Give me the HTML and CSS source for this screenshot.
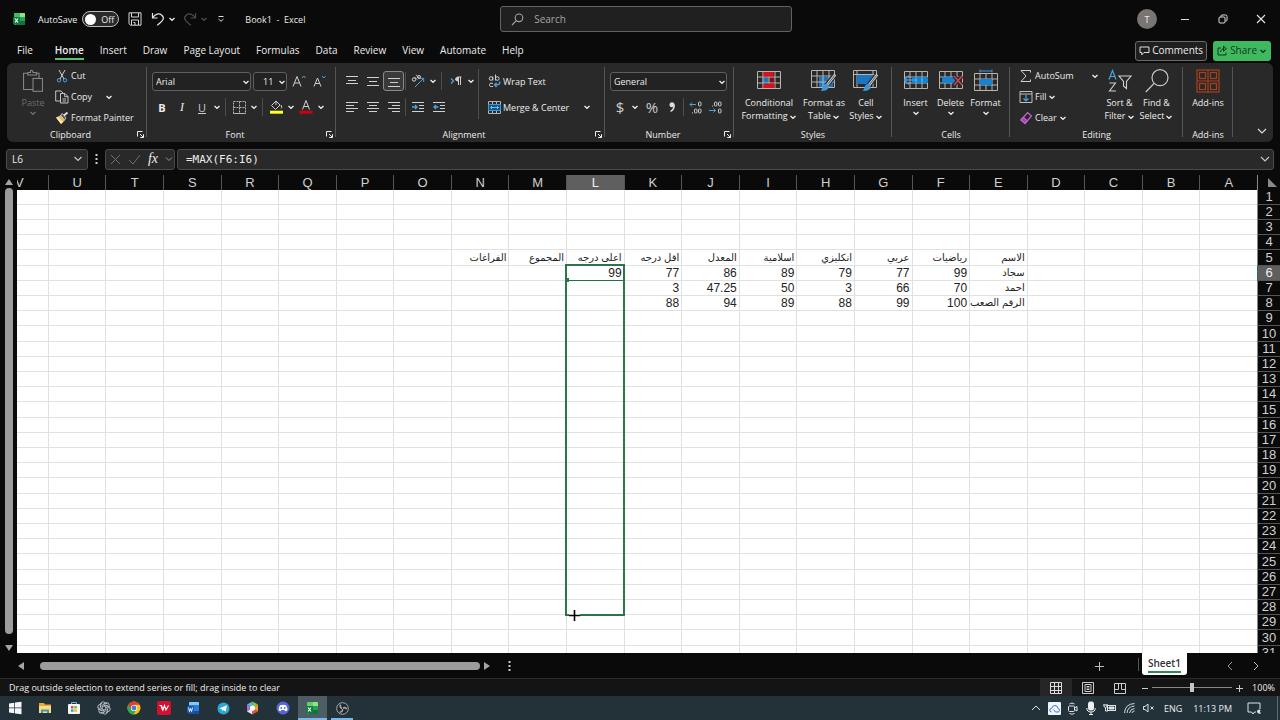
FILE: index.html
```html
<!DOCTYPE html>
<html lang="en">
<head>
<meta charset="utf-8">
<title>Book1 - Excel</title>
<link rel="stylesheet" href="styles.css">
</head>
<body>
<svg class="defs" aria-hidden="true">
  <symbol id="chev" viewBox="0 0 8 8"><path d="M1.500 3 4 5.300 6.500 3" fill="none" stroke="currentColor" stroke-width="1.300"/></symbol>
  <symbol id="launch" viewBox="0 0 9 9"><path d="M1.500 6.500V1.500H6.500M4 4l3.500 3.500M7.500 4.200v3.300H4.200" fill="none" stroke="currentColor"/></symbol>
  <symbol id="grid" viewBox="0 0 24 20"><path d="M.5 1.500h23v17H.5zM.5 7h23M.5 13h23M6 1.500v17M12 1.500v17M18 1.500v17" fill="none" stroke="#b9b5ad"/></symbol>
  <symbol id="brush" viewBox="0 0 16 18"><path d="M14.800 1 7 11" stroke="#292929" stroke-width="5"/><path d="M14.500 1.500 7.500 10.500" stroke="#c9c9c9" stroke-width="2.800" stroke-linecap="round"/><path d="M14.500 1.500 7.500 10.500" stroke="#444" stroke-width=".8"/><path d="M8.300 11.500c1.300 3.500-2 6-8 5.300 2.500-1 2-5.500 4.500-6.500 1.400-.4 3 0 3.500 1.200z" fill="#3f97d3"/></symbol>
</svg>

<header class="titlebar">
  <div class="quick">
    <svg class="logo" width="14" height="14" viewBox="0 0 14 14"><rect x="2" y="1" width="11" height="12" rx="1" fill="#21a35a"/><path d="M8 1h4q1 0 1 1v3H8z" fill="#9be07a"/><path d="M2 5V2q0-1 1-1h5v4z" fill="#3dbb62"/><path d="M8 9h5v3q0 1-1 1H4V9z" fill="#14703d"/><rect x="1" y="5" width="7" height="7" rx="1" fill="#107c41"/><path d="m3 6.500 3 4m0-4-3 4" stroke="#fff" stroke-width="1.100"/></svg>
    <label class="autosave">AutoSave <input type="checkbox" class="switch-input"><span class="switch"><i></i>Off</span></label>
    <button class="plain" aria-label="Save"><svg width="14" height="14" viewBox="0 0 14 14" fill="none" stroke="#d8d8d8"><path d="M1 .8h12v12.400H2.500L1 11.800zM3.500 1v4h7V1M3.500 13V8h7v5M5.500 10.500h1.500V13"/></svg></button>
    <button class="plain undo" aria-label="Undo"><svg width="14" height="14" viewBox="0 0 14 14" fill="none" stroke="#e4e4e4" stroke-width="1.200"><path d="M1.500 1v5h5M1.700 5.800C4 2 8 .8 10.800 3.200s2.200 5-4.600 10"/></svg><svg class="chev"><use href="#chev"/></svg></button>
    <button class="plain redo" aria-label="Redo" disabled><svg width="14" height="14" viewBox="0 0 14 14" fill="none" stroke="#4c4c4c" stroke-width="1.200"><path d="M12.500 1v5h-5M12.300 5.800C10 2 6 .8 3.200 3.200S1 8.200 7.800 13.200"/></svg><svg class="chev"><use href="#chev"/></svg></button>
    <button class="plain custom" aria-label="Customize toolbar"><svg width="8" height="8" viewBox="0 0 8 8" fill="none" stroke="#ddd"><path d="M1.500 1.500h5M1.500 4 4 6.300 6.500 4"/></svg></button>
    <h1 class="doc">Book1&nbsp; -&nbsp; Excel</h1>
  </div>
  <label class="search"><svg width="13" height="13" viewBox="0 0 13 13" fill="none" stroke="#a5a5a5" stroke-width="1.100"><circle cx="8" cy="4.800" r="3.800"/><path d="M5.300 7.600 1 12"/></svg><input type="text" placeholder="Search" aria-label="Search"></label>
  <div class="window">
    <button class="avatar" aria-label="Account">T</button>
    <button class="plain win" aria-label="Minimize"><svg width="10" height="10" viewBox="0 0 10 10" stroke="#ddd"><path d="M1 5.500h8"/></svg></button>
    <button class="plain win" aria-label="Restore"><svg width="10" height="10" viewBox="0 0 10 10" fill="none" stroke="#ddd"><rect x="1" y="3" width="6" height="6" rx="1"/><path d="M3 2.800V2q0-1 1-1h3.500Q9 1 9 2.500V6q0 1-1.500 1"/></svg></button>
    <button class="plain win" aria-label="Close"><svg width="10" height="10" viewBox="0 0 10 10" stroke="#e4e4e4" stroke-width="1.100"><path d="m1 1 8 8M9 1 1 9"/></svg></button>
  </div>
</header>

<nav class="tabs">
  <button class="file">File</button><button class="on">Home</button><button>Insert</button><button>Draw</button><button>Page Layout</button><button>Formulas</button><button>Data</button><button>Review</button><button>View</button><button>Automate</button><button>Help</button>
  <span class="grow"></span>
  <button class="comments"><svg width="11" height="10" viewBox="0 0 11 10" fill="none" stroke="#e0e0e0"><path d="M1 1h9v5.500H5L2.800 8.800V6.500H1z"/></svg>Comments</button>
  <button class="share"><svg width="11" height="11" viewBox="0 0 11 11" fill="none" stroke="#0c3b1c"><path d="M4 3H1v7h8V7.500M3.500 7c.3-2.500 2-3.300 4-3.300M6.500 1.200l3 2.500-3 2.500z"/></svg>Share<svg class="chev"><use href="#chev"/></svg></button>
</nav>

<main class="ribbon">
  <section class="group clipboard">
    <div class="body">
      <button class="big paste" disabled><svg width="26" height="28" viewBox="0 0 26 28" fill="none" stroke="#8a8a8a" stroke-width="1.200"><path d="M7 5H2v19h11M17 5h3v6"/><path d="M7 7V4h3q0-2.500 1.500-2.500T13 4h4v3z"/><rect x="13" y="11" width="11" height="15"/></svg><span>Paste</span><svg class="chev"><use href="#chev"/></svg></button>
      <div class="stack">
        <button class="line"><svg width="14" height="14" viewBox="0 0 14 14" fill="none" stroke="#d2d2d2"><path d="M4 1 9 10M10 1 5 10"/><circle cx="4" cy="11.200" r="1.700" stroke="#4aa3df"/><circle cx="10" cy="11.200" r="1.700" stroke="#4aa3df"/></svg>Cut</button>
        <button class="line"><svg width="14" height="14" viewBox="0 0 14 14" fill="none" stroke="#c4c4c4"><path d="M5 11H.7V1H6l2 2M5.500 3.500h4.500l3 3v6.500H5.500zM9.700 3.700v3H13M7.500 9h3.500M7.500 11h3.500"/></svg>Copy<svg class="chev far"><use href="#chev"/></svg></button>
        <button class="line"><svg width="14" height="14" viewBox="0 0 14 14"><path d="M1 6.500 6 4l4 5.500L6 13z" fill="#e7b45e"/><path d="m1 6.500 2.500-.5L8 11l-2 2z" fill="#fbe3ae"/><path d="m5.500 4 2-1.500L11 7 9.500 9z" fill="#555" stroke="#ddd" stroke-width=".8"/><path d="m9 4.500 3.500-3" stroke="#ddd" stroke-width="2"/></svg>Format Painter</button>
      </div>
    </div>
    <footer class="wide">Clipboard<button class="launch" aria-label="Clipboard options"><svg><use href="#launch"/></svg></button></footer>
  </section>

  <section class="group font">
    <div class="body rows">
      <div class="row">
        <span class="select face"><select aria-label="Font"><option>Arial</option></select><svg class="chev"><use href="#chev"/></svg></span>
        <span class="select size"><select aria-label="Font size"><option>11</option></select><svg class="chev"><use href="#chev"/></svg></span>
        <button class="ib" aria-label="Increase font size"><svg width="14" height="14" viewBox="0 0 14 14" fill="none" stroke="#d0d0d0"><path d="M1 12.500 5 2.500l4 10M2.500 9h5"/><path d="m10 4 1.800-2L13.500 4" stroke="#4aa3df"/></svg></button>
        <button class="ib" aria-label="Decrease font size"><svg width="14" height="14" viewBox="0 0 14 14" fill="none" stroke="#d0d0d0"><path d="M2 12.500 5.500 4 9 12.500M3.300 9.500h4.500"/><path d="m10 2 1.800 2 1.700-2" stroke="#4aa3df"/></svg></button>
      </div>
      <div class="row">
        <button class="ib bold">B</button><button class="ib ital">I</button><button class="ib under">U</button><button class="cb" aria-label="Underline options"><svg class="chev"><use href="#chev"/></svg></button>
        <i class="sep"></i>
        <button class="ib" aria-label="Borders"><svg width="13" height="13" viewBox="0 0 13 13" fill="none" stroke="#b5b5b5"><path d="M.5.5h12v12H.5zM6.500.5v12M.5 6.500h12" stroke-dasharray="2 1"/><path d="M.5 12.500h12"/></svg></button><button class="cb" aria-label="Border options"><svg class="chev"><use href="#chev"/></svg></button>
        <i class="sep"></i>
        <button class="ib" aria-label="Fill color"><svg width="14" height="14" viewBox="0 0 14 14" fill="none" stroke="#d0d0d0"><path d="m7 1 4 4-4.500 4.500-4-4zM7 1v4M12 5q1.500 3 0 3.500"/><path d="M1 12.200h13" stroke="#ffff24" stroke-width="3"/></svg></button><button class="cb" aria-label="Fill color options"><svg class="chev"><use href="#chev"/></svg></button>
        <button class="ib" aria-label="Font color"><svg width="14" height="14" viewBox="0 0 14 14" fill="none" stroke="#d0d0d0"><path d="m3.500 9.500 3.500-9 3.500 9M4.800 6.500h4.500"/><path d="M.5 12.200h13" stroke="#d00012" stroke-width="3"/></svg></button><button class="cb" aria-label="Font color options"><svg class="chev"><use href="#chev"/></svg></button>
      </div>
    </div>
    <footer class="wide">Font<button class="launch" aria-label="Font options"><svg><use href="#launch"/></svg></button></footer>
  </section>

  <section class="group align">
    <div class="body">
      <div class="rows left">
        <div class="row">
          <button class="ib" aria-label="Top align"><svg width="12" height="12" viewBox="0 0 12 12" stroke="#d0d0d0"><path d="M0 1.500h12M2 5.500h8M0 8.500h12"/></svg></button><button class="ib" aria-label="Middle align"><svg width="12" height="12" viewBox="0 0 12 12" stroke="#d0d0d0"><path d="M0 2.500h12M2 6.500h8M0 10.500h12"/></svg></button><button class="ib sel" aria-label="Bottom align"><svg width="12" height="12" viewBox="0 0 12 12" stroke="#d0d0d0"><path d="M0 3.500h12M2 7.500h8M0 11.500h12"/></svg></button>
          <i class="sep tight"></i>
          <button class="ib" aria-label="Orientation"><svg width="14" height="14" viewBox="0 0 14 14" fill="none" stroke="#d0d0d0"><circle cx="3" cy="5.500" r="1.700"/><path d="m3.500 3 2.500 2.500M5 .8l3.500 3.500"/><circle cx="8" cy="3" r="1.500"/><path d="m4 13 8.500-8.500M9 4.300h3.700V8" stroke="#4aa3df"/></svg></button><button class="cb" aria-label="Orientation options"><svg class="chev"><use href="#chev"/></svg></button>
          <i class="sep"></i>
          <button class="ib" aria-label="Text direction"><svg width="12" height="12" viewBox="0 0 12 12" fill="none" stroke="#d0d0d0"><path d="m1 3.500 2.500 2.500L1 8.500" stroke="#4aa3df" stroke-width="1.300"/><path d="M8.500 2v8M10.500 2v8M11.500 2H7.500"/><path d="M8 2.200q-2.500.3-2.500 2T8 6z" fill="#d0d0d0"/></svg></button><button class="cb" aria-label="Text direction options"><svg class="chev"><use href="#chev"/></svg></button>
        </div>
        <div class="row">
          <button class="ib" aria-label="Align left"><svg width="12" height="12" viewBox="0 0 12 12" stroke="#d0d0d0"><path d="M0 1.500h12M0 4.500h8M0 7.500h12M0 10.500h8"/></svg></button><button class="ib" aria-label="Center"><svg width="12" height="12" viewBox="0 0 12 12" stroke="#d0d0d0"><path d="M0 1.500h12M2 4.500h8M0 7.500h12M2 10.500h8"/></svg></button><button class="ib" aria-label="Align right"><svg width="12" height="12" viewBox="0 0 12 12" stroke="#d0d0d0"><path d="M0 1.500h12M4 4.500h8M0 7.500h12M4 10.500h8"/></svg></button>
          <i class="sep tight"></i>
          <button class="ib" aria-label="Decrease indent"><svg width="12" height="12" viewBox="0 0 12 12" fill="none" stroke="#d0d0d0"><path d="M0 1.500h12M7 4.500h5M7 7.500h5M0 10.500h12"/><path d="M0 6h4.500M3 4l2 2-2 2" stroke="#4aa3df" stroke-width="1.300"/></svg></button><button class="ib" aria-label="Increase indent"><svg width="12" height="12" viewBox="0 0 12 12" fill="none" stroke="#d0d0d0"><path d="M0 1.500h12M7 4.500h5M7 7.500h5M0 10.500h12"/><path d="M.8 6h4.700M3 4 1 6l2 2" stroke="#4aa3df" stroke-width="1.300"/></svg></button>
        </div>
      </div>
      <i class="tall"></i>
      <div class="rows right">
        <div class="row"><button class="line"><svg width="13" height="14" viewBox="0 0 13 14" fill="none" stroke="#d0d0d0"><circle cx="3" cy="4.500" r="1.800"/><path d="M4.800 2.500v4M7.500.5v6M5 9.500Q2 8 1.500 10.500T5 12.500"/><circle cx="9.300" cy="4.500" r="1.800"/><path d="M11.500 7.500q1.500 3.500-5 3.500M8.500 8.800 6.500 11l2 2" stroke="#4aa3df" stroke-width="1.300"/></svg>Wrap Text</button></div>
        <div class="row"><button class="line"><svg width="13" height="13" viewBox="0 0 13 13" fill="none" stroke="#b5b5b5"><path d="M.5.5h12v12H.5zM4.500.5v3M8.500.5v3M4.500 9.500v3M8.500 9.500v3"/><path d="M.5 3.500h12v6H.5z" fill="#155480" stroke="#3f97d3"/><path d="M2.500 6.500h8M4 5 2.500 6.500 4 8M9 5l1.500 1.500L9 8" stroke="#6cc0f5"/></svg>Merge &amp; Center</button><button class="cb mergeopt" aria-label="Merge options"><svg class="chev"><use href="#chev"/></svg></button></div>
      </div>
    </div>
    <footer class="wide">Alignment<button class="launch" aria-label="Alignment options"><svg><use href="#launch"/></svg></button></footer>
  </section>

  <section class="group number">
    <div class="body rows">
      <div class="row"><span class="select fmt"><select aria-label="Number format"><option>General</option></select><svg class="chev"><use href="#chev"/></svg></span></div>
      <div class="row">
        <button class="ib sym">$</button><button class="cb" aria-label="Currency options"><svg class="chev"><use href="#chev"/></svg></button><button class="ib sym pct">%</button><button class="ib" aria-label="Comma style"><svg width="8" height="12" viewBox="0 0 8 12"><circle cx="4" cy="3.800" r="2.500" fill="#dcdcdc"/><path d="M6 3.500q.8 4.500-3.500 7" fill="none" stroke="#dcdcdc" stroke-width="1.400"/></svg></button>
        <i class="sep tight"></i>
        <button class="ib" aria-label="Increase decimal"><svg width="13" height="13" viewBox="0 0 13 13" fill="none" stroke="#c8c8c8"><rect x="9.500" y="1" width="2.500" height="4" rx="1"/><rect x="5.500" y="8" width="2.500" height="4" rx="1"/><rect x="9.500" y="8" width="2.500" height="4" rx="1"/><path d="M3.500 11.500v1"/><path d="M7 3.500H1M3 1.500l-2 2 2 2" stroke="#4aa3df"/></svg></button><button class="ib" aria-label="Decrease decimal"><svg width="13" height="13" viewBox="0 0 13 13" fill="none" stroke="#c8c8c8"><rect x="5.500" y="1" width="2.500" height="4" rx="1"/><rect x="9.500" y="1" width="2.500" height="4" rx="1"/><rect x="9.500" y="8" width="2.500" height="4" rx="1"/><path d="M3.500 4.500v1"/><path d="M0 9.500h6.500M4.500 7.500l2 2-2 2" stroke="#4aa3df"/></svg></button>
      </div>
    </div>
    <footer class="wide">Number<button class="launch" aria-label="Number options"><svg><use href="#launch"/></svg></button></footer>
  </section>

  <section class="group styles">
    <div class="body">
      <button class="big cf"><svg width="24" height="22" viewBox="0 0 24 22"><path d="M5.500 2h10v5h-10zM5.500 14h12v5h-12z" fill="#d3121f"/><path d="M5.500 7.500h6v6h-6z" fill="#1976c5"/><path d="M12 7.500h6v6h-6z" fill="#7c141c"/><use href="#grid" width="24" height="20"/><path d="M6.500 2h10v4.500h-10zM6.500 13.500h11V18h-11z" fill="#d3121f"/></svg><span>Conditional<br>Formatting<svg class="chev"><use href="#chev"/></svg></span></button>
      <button class="big ft"><svg width="26" height="24" viewBox="0 0 26 24"><path d="M8 8h14v10H8z" fill="#1976c5"/><use href="#grid" width="24" height="20"/><use href="#brush" x="9" y="5" width="16" height="18"/></svg><span>Format as<br>Table<svg class="chev"><use href="#chev"/></svg></span></button>
      <button class="big cs"><svg width="26" height="24" viewBox="0 0 26 24"><path d="M.5 1.500h23v17H.5zM.5 5.500h23M4 1.500v17M20 1.500v17" fill="none" stroke="#b9b5ad"/><path d="M4 6h16v9H4z" fill="#1976c5"/><use href="#brush" x="9" y="5" width="16" height="18"/></svg><span>Cell<br>Styles<svg class="chev"><use href="#chev"/></svg></span></button>
    </div>
    <footer>Styles</footer>
  </section>

  <section class="group cells">
    <div class="body">
      <button class="big"><svg width="26" height="22" viewBox="0 0 26 22"><g transform="translate(1 0)"><use href="#grid" width="24" height="20"/></g><path d="M9 7h16v6H9z" fill="#1583d4"/><path d="M13 7.500v5M19 7.500v5" stroke="#6cc0f5"/><path d="M12 10H1.500M6 5.500 1.500 10 6 14.500" fill="none" stroke="#3b9fe0" stroke-width="1.400"/></svg><span>Insert</span><svg class="chev"><use href="#chev"/></svg></button>
      <button class="big"><svg width="26" height="22" viewBox="0 0 26 22"><g transform="translate(1 0)"><use href="#grid" width="24" height="20"/></g><path d="M4 7h13v6H4z" fill="#1583d4"/><path d="m16 6 8 9M24 6l-8 9" stroke="#292929" stroke-width="4"/><path d="m16 6 8 9M24 6l-8 9" stroke="#e0434c" stroke-width="1.400"/></svg><span>Delete</span><svg class="chev"><use href="#chev"/></svg></button>
      <button class="big"><svg width="26" height="22" viewBox="0 -2 26 22"><g transform="translate(1 0)"><use href="#grid" width="24" height="20"/></g><path d="M7 7h12v6H7z" fill="#1583d4"/><path d="M7-1h12M7-2.500v3M19-2.500v3" stroke="#3b9fe0"/></svg><span>Format</span><svg class="chev"><use href="#chev"/></svg></button>
    </div>
    <footer>Cells</footer>
  </section>

  <section class="group editing">
    <div class="body">
      <div class="stack">
        <button class="line"><svg width="14" height="14" viewBox="0 0 14 14" fill="none" stroke="#d0d0d0"><path d="M11.500 3.500V1.500H2L7 7l-5 5.500h9.500v-2"/></svg>AutoSum<svg class="chev sum"><use href="#chev"/></svg></button>
        <button class="line"><svg width="14" height="14" viewBox="0 0 14 14" fill="none" stroke="#c0c0c0"><path d="M1 1.500h12v11H1zM1 4h12"/><path d="M7 5v6M4.500 8.500 7 11l2.500-2.500" stroke="#4aa3df" stroke-width="1.200"/></svg>Fill<svg class="chev"><use href="#chev"/></svg></button>
        <button class="line"><svg width="14" height="14" viewBox="0 0 14 14" fill="none" stroke="#c565d0" stroke-width="1.200"><path d="M8.500 1.500 12.500 5 6 12.500 2 9z"/><path d="M2 9l2.300-2.700 4 3.500L6 12.500z" fill="#a43fb0"/></svg>Clear<svg class="chev"><use href="#chev"/></svg></button>
      </div>
      <button class="big sf"><svg width="24" height="24" viewBox="0 0 24 24" fill="none"><path d="m1 10.500 3.500-9 3.500 9M2.200 7.500h4.600" stroke="#4aa3df" stroke-width="1.200"/><path d="M1.500 14h6L1.500 22H8M11 7h12l-4.500 5.500v7l-3-2.500v-4.500z" stroke="#d0d0d0" stroke-width="1.100"/></svg><span>Sort &amp;<br>Filter<svg class="chev"><use href="#chev"/></svg></span></button>
      <button class="big fs"><svg width="24" height="24" viewBox="0 0 24 24" fill="none" stroke="#c8c8c8" stroke-width="1.200"><circle cx="15" cy="8.700" r="8"/><path d="M9 14.500.8 23"/></svg><span>Find &amp;<br>Select<svg class="chev"><use href="#chev"/></svg></span></button>
    </div>
    <footer>Editing</footer>
  </section>

  <section class="group addins">
    <div class="body"><button class="big"><svg width="24" height="24" viewBox="0 0 24 24" fill="none" stroke="#a8401f" stroke-width="1.200"><rect x="1" y="1" width="22" height="22"/><path d="M12 1v22M1 12h22"/><rect x="3.500" y="3.500" width="6" height="6"/><rect x="14.500" y="3.500" width="6" height="6"/><rect x="3.500" y="14.500" width="6" height="6"/><rect x="14.500" y="14.500" width="6" height="6"/></svg><span>Add-ins</span></button></div>
    <footer>Add-ins</footer>
  </section>
  <button class="plain collapse" aria-label="Collapse ribbon"><svg width="10" height="10" viewBox="0 0 10 10" fill="none" stroke="#ddd" stroke-width="1.200"><path d="m1 3 4 4 4-4"/></svg></button>
</main>

<div class="formula">
  <div class="box name"><input type="text" value="L6" aria-label="Name box"><svg width="10" height="10" viewBox="0 0 10 10" fill="none" stroke="#c4c4c4" stroke-width="1.200"><path d="m1.500 3 3.500 3.500L8.500 3"/></svg></div>
  <svg class="dots" width="3" height="10" viewBox="0 0 3 10" fill="#ccc"><path d="M.5 0h2v2h-2zM.5 4h2v2h-2zM.5 8h2v2h-2z"/></svg>
  <div class="box fx">
    <button class="plain" aria-label="Cancel"><svg width="11" height="11" viewBox="0 0 11 11" stroke="#6f6f6f"><path d="m1 1 9 9M10 1l-9 9"/></svg></button>
    <button class="plain" aria-label="Enter"><svg width="13" height="11" viewBox="0 0 13 11" fill="none" stroke="#6f6f6f"><path d="m1 6 4 4 7-9"/></svg></button>
    <button class="plain fn">fx</button>
    <svg width="8" height="8" viewBox="0 0 8 8" fill="none" stroke="#999"><path d="m1 2.500 3 3 3-3"/></svg>
  </div>
  <div class="box expr"><input type="text" value="=MAX(F6:I6)" aria-label="Formula"><svg width="10" height="10" viewBox="0 0 10 10" fill="none" stroke="#c4c4c4" stroke-width="1.200"><path d="m1 3 4 4 4-4"/></svg></div>
</div>

<div class="work">
  <div class="vscroll"><i class="arrow up"></i><i class="thumb"></i><i class="arrow down"></i></div>
  <div class="sheet"><table dir="rtl" id="cells" aria-label="Sheet1"></table></div>
  <svg class="cursor" width="11" height="11" viewBox="0 0 11 11"><path d="M5.500 0v11M0 5.500h11" stroke="#fff" stroke-width="4"/><path d="M5.500 0v11M0 5.500h11" stroke="#000" stroke-width="1.600"/></svg>
</div>

<div class="sheetbar">
  <div class="hscroll"><i class="arrow prev"></i><i class="thumb"></i><i class="arrow next"></i></div>
  <svg class="dots" width="3" height="10" viewBox="0 0 3 10" fill="#ccc"><path d="M.5 0h2v2h-2zM.5 4h2v2h-2zM.5 8h2v2h-2z"/></svg>
  <span class="grow"></span>
  <button class="plain add" aria-label="New sheet"><svg width="10" height="10" viewBox="0 0 10 10" stroke="#bbb"><path d="M5.500 1v9M1 5.500h9"/></svg></button>
  <button class="sheettab"><span>Sheet1</span></button>
  <div class="nav"><button class="plain" aria-label="Previous sheet"><svg width="8" height="10" viewBox="0 0 8 10" fill="none" stroke="#999"><path d="M6 1 2 5l4 4"/></svg></button><button class="plain" aria-label="Next sheet"><svg width="8" height="10" viewBox="0 0 8 10" fill="none" stroke="#bbb"><path d="m2 1 4 4-4 4"/></svg></button></div>
</div>

<div class="status">
  <span class="msg">Drag outside selection to extend series or fill; drag inside to clear</span>
  <span class="grow"></span>
  <button class="view on" aria-label="Normal view"><svg width="12" height="12" viewBox="0 0 12 12" fill="none" stroke="#ddd"><path d="M.5.5h11v11H.5zM4.500.5v11M8.500.5v11M.5 4.500h11M.5 8.500h11"/></svg></button>
  <button class="view" aria-label="Page layout view"><svg width="12" height="12" viewBox="0 0 12 12" fill="none" stroke="#ccc"><path d="M.5.5h11v11H.5zM3 2.500h6v7H3zM4.500 4.500h3M4.500 6h3M4.500 7.500h3"/></svg></button>
  <button class="view last" aria-label="Page break view"><svg width="12" height="12" viewBox="0 0 12 12" fill="none" stroke="#ccc"><path d="M.5 1.500h11v10H.5zM4.500 1v6.500H.5M7.500 1v6.500h4"/></svg></button>
  <button class="plain zoomb" aria-label="Zoom out"><svg width="8" height="8" viewBox="0 0 8 8" stroke="#ccc"><path d="M1 4.500h6"/></svg></button>
  <input class="zoom" type="range" min="0" max="100" value="50" aria-label="Zoom">
  <button class="plain zoomb" aria-label="Zoom in"><svg width="8" height="8" viewBox="0 0 8 8" stroke="#ccc"><path d="M1 4.500h7M4.500 1v7"/></svg></button>
  <span class="pct">100%</span>
</div>

<div class="taskbar">
  <div class="apps">
    <button aria-label="Start"><svg width="14" height="14" viewBox="0 0 14 14" fill="#f5f8fa"><path d="M1 2.500 6.300 1.700v4.900H1zM7 1.600 13.500.7v5.900H7zM1 7.300h5.300v4.900L1 11.400zM7 7.300h6.500v6L7 12.400z"/></svg></button>
    <button aria-label="Files"><svg width="14" height="14" viewBox="0 0 14 14"><path d="M1 2h5l1 1.500h6V12H1z" fill="#e8a935"/><path d="M1 5h12v7H1z" fill="#ffdc7a"/><path d="M3 12V8.500h8V12H9V10.500H5V12z" fill="#3d94c9"/></svg></button>
    <button aria-label="Store"><svg width="14" height="14" viewBox="0 0 14 14"><path d="M4.500 3.500V1.500h5v2" fill="none" stroke="#6ab8e8"/><rect x="1" y="3" width="12" height="10" rx="1" fill="#f4f4f4"/><path d="M4 5h2.500v2.500H4z" fill="#e5512c"/><path d="M7.300 5h2.500v2.500H7.300z" fill="#7cb42c"/><path d="M4 8.300h2.500v2.500H4z" fill="#2a9fe0"/><path d="M7.300 8.300h2.500v2.500H7.300z" fill="#f5b416"/></svg></button>
    <button aria-label="ChatGPT"><svg width="14" height="14" viewBox="-7 -7 14 14" fill="none" stroke="#b5bec2" stroke-width=".9"><g id="petal"><path d="M-3.500-1V-4Q-3-6.300-.5-6.200L3.200-4M-1.800 1v-3.700l3.600-2"/></g><use href="#petal" transform="rotate(60)"/><use href="#petal" transform="rotate(120)"/><use href="#petal" transform="rotate(180)"/><use href="#petal" transform="rotate(240)"/><use href="#petal" transform="rotate(300)"/></svg></button>
    <button aria-label="Chrome"><svg width="14" height="14" viewBox="0 0 14 14"><circle cx="7" cy="7" r="6.500" fill="#fbc116"/><path d="M7 7 1.400 3.700A6.500 6.500 0 0 0 6.500 13.500L9.500 8.500z" fill="#2da94f"/><path d="M1.400 3.700A6.500 6.500 0 0 1 12.600 3.700H7L3.800 8z" fill="#e33b2e"/><circle cx="7" cy="7" r="3.100" fill="#fff"/><circle cx="7" cy="7" r="2.400" fill="#3e7de0"/></svg></button>
    <button aria-label="WPS Office"><svg width="14" height="14" viewBox="0 0 14 14"><rect width="14" height="14" rx="2.500" fill="#d5102f"/><path d="M2.500 4.500h2L6 9l1.500-4.500L9 9l2.500-4.500M4 4.500 5.500 9h1" fill="none" stroke="#fff" stroke-width="1.100"/></svg></button>
    <button aria-label="Word"><svg width="14" height="14" viewBox="0 0 14 14"><rect x="3" y="1" width="10" height="12" rx="1" fill="#2b7cd3"/><path d="M3 4V2q0-1 1-1h8q1 0 1 1v2z" fill="#7fc8f8"/><path d="M3 10h10v2q0 1-1 1H4q-1 0-1-1z" fill="#1a4ba0"/><rect x="1" y="5" width="7" height="7" rx="1" fill="#185abd"/><path d="m2.500 6.500 1 4 1-3 1 3 1-4" fill="none" stroke="#fff" stroke-width=".9"/></svg></button>
    <button aria-label="Telegram"><svg width="13" height="13" viewBox="0 0 13 13"><circle cx="6.500" cy="6.500" r="6" fill="#2ba5dc"/><path d="m2.500 6.300 7.500-3-1.300 6.500-2.300-1.700-1.200 1.200V7.500z" fill="#fff"/></svg></button>
    <button aria-label="Gallery"><svg width="13" height="14" viewBox="0 0 13 14"><path d="M6.500.5 1 3.500 6.500 7z" fill="#52b9e9"/><path d="M6.500.5 12 3.500 6.500 7z" fill="#8bc34a"/><path d="M1 3.500v7L6.500 7z" fill="#b66ad0"/><path d="M12 3.500v7L6.500 7z" fill="#ef9b30"/><path d="m1 10.500 5.500 3V7z" fill="#e9e9e9"/><path d="m12 10.500-5.500 3V7z" fill="#e14f43"/><path d="m6.500 4.300 2.500 1.400v3L6.500 10 4 8.700v-3z" fill="#fff"/></svg></button>
    <button aria-label="Discord"><svg width="14" height="14" viewBox="0 0 14 14"><circle cx="7" cy="7" r="6.500" fill="#5865d8"/><path d="M4 4.200q3-1 6 0 1.500 2.500 1.500 5-1.200.9-2.300 1L8.600 9H5.400l-.6 1.200q-1.100-.1-2.300-1 0-2.500 1.500-5z" fill="#fff"/><circle cx="5.300" cy="7" r=".9" fill="#5865d8"/><circle cx="8.700" cy="7" r=".9" fill="#5865d8"/></svg></button>
    <button class="active" aria-label="Excel"><svg width="14" height="14" viewBox="0 0 14 14"><rect x="2" y="1" width="11" height="12" rx="1" fill="#21a35a"/><path d="M8 1h4q1 0 1 1v3H8z" fill="#9be07a"/><path d="M2 5V2q0-1 1-1h5v4z" fill="#5fd06a"/><path d="M8 9h5v3q0 1-1 1H4V9z" fill="#14703d"/><rect x="1" y="5" width="7" height="7" rx="1" fill="#107c41"/><path d="m3 6.500 3 4m0-4-3 4" stroke="#fff" stroke-width="1.100"/></svg></button>
    <button class="open" aria-label="OBS"><svg width="13" height="13" viewBox="0 0 13 13"><circle cx="6.500" cy="6.500" r="5.800" fill="#20262a" stroke="#a5adb0"/><path d="M6 6.500q-2.500-1-1.500-4M7 6q2.300-1.200 3.800 1.200M6.500 7q.5 2.800-2.800 3.200" fill="none" stroke="#a5adb0" stroke-width="1.500"/></svg></button>
  </div>
  <span class="grow"></span>
  <div class="tray">
    <svg width="12" height="12" viewBox="0 0 12 12" fill="none" stroke="#dde3e6"><path d="m2 8 4-4 4 4"/></svg>
    <svg width="13" height="13" viewBox="0 0 13 13"><rect width="13" height="13" rx="1" fill="#eef5ff"/><path d="M3.500 10Q1.500 9.800 1.800 8t2-1.700Q4.300 3.500 7 3.500t3 3q1.700.3 1.500 1.900T10 10H7.500L5.500 7.500" fill="none" stroke="#3f78d0"/></svg>
    <svg width="12" height="13" viewBox="0 0 12 13" fill="none" stroke="#dde3e6"><rect x="1.500" y="4" width="6" height="5.500" rx="1"/><path d="m7.500 6 2.500-1.500V9L7.500 7.500M2.500 2q2.500-2 5 0M2.500 11.500q2.500 1.500 5 0"/></svg>
    <svg width="12" height="14" viewBox="0 0 12 14" fill="none" stroke="#eef2f4"><rect x="3.500" y="1" width="5" height="8" rx="1.500" fill="#eef2f4"/><path d="M1.800 7q0 4 4.200 4t4.200-4M6 11v2M4 13.500h4"/></svg>
    <svg width="14" height="12" viewBox="0 0 14 12" fill="none" stroke="#dde3e6"><rect x="4.500" y="3.500" width="8" height="5"/><path d="M6 5h5v2H6z" fill="#dde3e6"/><path d="M1 2v2q0 1.500 1.500 1.500T4 4V2M.5 3h4M2.500 5.500V9H5"/></svg>
    <svg width="13" height="12" viewBox="0 0 13 12" fill="none" stroke="#cfd6d9"><path d="M1.500 11Q2 2 11.500 1.500M4 11q.5-6.500 7.500-7M6.500 11q.5-4 5-4.500M9 11q.3-2 2.500-2"/></svg>
    <svg width="13" height="12" viewBox="0 0 13 12" fill="none" stroke="#dde3e6"><path d="M1.500 4.500H3L6 2v8L3 7.500H1.500zM8.500 4.500l3 3M11.500 4.500l-3 3"/></svg>
    <span class="lang">ENG</span><time>11:13 PM</time>
    <svg class="note" width="14" height="13" viewBox="0 0 14 13" fill="none" stroke="#dde3e6"><path d="M9 10H7.500L6 12 4.500 10H1V1h12v6"/><path d="M13 8q-3-.5-2.500 2 .8 2 3 1-2-.5-.5-3z" fill="#dde3e6"/></svg>
    <i class="peek"></i>
  </div>
</div>
<script src="sheet.js"></script>
</body>
</html>
```

FILE: styles.css
```css
* { box-sizing: border-box; }
html, body { height: 100%; }
body {
  margin: 0;
  display: flex;
  flex-direction: column;
  overflow: hidden;
  background: #0a0a0a;
  color: #ececec;
  font: 10px/13px "Open Sans", "Noto Sans", sans-serif;
}
button, input, select { font: inherit; color: inherit; }
button { background: none; border: 0; padding: 0; white-space: nowrap; }
svg { flex: none; display: block; }
i { flex: none; }
.defs { position: absolute; width: 0; height: 0; }
.chev { width: 8px; height: 8px; }
.grow { flex: 1; }
.plain { display: flex; align-items: center; justify-content: center; }

/* Title bar */
.titlebar {
  display: grid;
  grid-template-columns: 1fr 23% 1fr;
  align-items: center;
  height: 38px;
  padding-left: 12px;
}
.quick { display: flex; align-items: center; }
.autosave { display: flex; align-items: center; margin: 0 9px 0 12px; font-size: 9px; gap: 5px; }
.switch-input { position: absolute; opacity: 0; }
.switch {
  display: flex; align-items: center; gap: 5px;
  width: 37px; height: 16px; padding-left: 2px;
  border: 1px solid #bdbdbd; border-radius: 8px; background: #2a2a2a;
}
.switch i { width: 11px; height: 11px; border-radius: 50%; background: #fff; }
.undo { margin-left: 9px; gap: 1px; }
.redo { margin-left: 7px; gap: 1px; color: #4c4c4c; }
.custom { margin-left: 9px; }
.undo .chev, .redo .chev { margin-left: 2px; }
.doc { margin: 0 0 0 20px; font-size: 9px; font-weight: 400; }
.search {
  display: flex; align-items: center; gap: 10px;
  height: 26px; padding: 0 10px;
  border: 1px solid #626262; border-radius: 3px; background: #202020;
}
.search input { flex: 1; min-width: 0; border: 0; padding: 0; background: none; outline: 0; }
.search input::placeholder { color: #a5a5a5; opacity: 1; }
.window { display: flex; justify-content: flex-end; align-items: center; }
.avatar { width: 20px; height: 20px; margin-right: 9px; border-radius: 50%; background: #797573; font-size: 9px; }
.win { width: 38px; height: 26px; }

/* Tabs */
.tabs { display: flex; align-items: center; gap: 16px; height: 25px; padding: 0 9px 0 17px; }
.tabs button { height: 19px; }
.tabs .file { margin-right: 6px; }
.tabs .on { font-weight: 600; border-bottom: 2px solid #5bbf78; padding-top: 2px; }
.tabs .comments, .tabs .share { display: flex; align-items: center; height: 20px; border-radius: 3px; }
.tabs .comments { gap: 2px; padding: 0 3px; margin-right: -10px; border: 1px solid #6a6a6a; background: #1f1f1f; }
.tabs .share { gap: 2px; padding: 0 4px; background: #3fb85f; color: #0c3b1c; }

/* Ribbon */
.ribbon { display: flex; min-height: 79px; margin: 0 7px; border-radius: 6px; background: #292929; font-size: 9px; line-height: 13px; }
.group { display: flex; flex-direction: column; position: relative; padding-top: 2px; }
.group::after { content: ""; position: absolute; right: 0; top: 4px; bottom: 5px; width: 1px; background: #555; }
.body { display: flex; flex: 1; }
.group footer { display: flex; justify-content: center; align-items: center; height: 14px; padding-bottom: 1px; }
.group .wide { padding-right: 13px; }
.launch { position: absolute; right: 2px; bottom: 3px; width: 9px; height: 9px; }
.launch svg { width: 9px; height: 9px; }
.stack { display: flex; flex-direction: column; }
.line { display: flex; align-items: center; gap: 2px; height: 21px; }
.far { margin-left: 11px; }
.rows { display: flex; flex-direction: column; padding-top: 3px; }
.row { display: flex; align-items: center; height: 26px; }
.ib { display: flex; align-items: center; justify-content: center; width: 20px; height: 20px; }
.cb { display: flex; align-items: center; justify-content: center; width: 10px; height: 20px; }
.sep { width: 1px; height: 18px; margin: 0 3px; background: #4e4e4e; }
.sep.tight { margin: 0 1px; }
.tall { width: 1px; height: 50px; background: #4e4e4e; margin-top: 4px; }
.select { position: relative; display: flex; }
.select select {
  width: 100%; height: 19px; padding: 0 3px;
  appearance: none; border: 1px solid #5f5f5f; border-radius: 3px; background: #222;
}
.select .chev { position: absolute; right: 1px; top: 6px; }
.face { width: 99px; margin-right: 2px; }
.size { width: 34px; margin-right: 2px; }
.size select { padding-left: 9px; }
.fmt { width: 117px; }
.big { display: flex; flex-direction: column; align-items: center; padding-top: 4px; }
.big > svg:first-child { height: 24px; }
.big > span { margin-top: 3px; text-align: center; }
.big span .chev { display: inline-block; vertical-align: middle; margin-left: 1px; }
.clipboard { width: 140px; }
.paste { width: 26px; margin: 0 9px 0 13px; color: #6d6d6d; }
.font { width: 189px; }
.font .body { padding-left: 5px; }
.bold { font-weight: 700; font-size: 11px; }
.ital { font: italic 12px "Liberation Serif", serif; }
.under { text-decoration: underline; font-size: 11px; color: #ccc; }
.align { width: 269px; }
.align .body { padding-left: 5px; }
.align .ib { width: 21px; }
.left { width: 137px; }
.right { padding-left: 9px; }
.sel { border: 1px solid #8a8a8a; border-radius: 3px; background: #3a3a3a; }
.mergeopt { margin-left: 13px; }
.number { width: 129px; }
.number .body { padding-left: 5px; }
.sym { font: 15px "Open Sans", sans-serif; color: #ccc; }
.number .pct { margin-left: 2px; }
.styles { width: 158px; }
.styles .body { padding-left: 4px; }
.cf { width: 62px; }
.ft { width: 48px; }
.cs { width: 36px; }
.cells { width: 118px; }
.cells .body { padding-left: 6px; }
.cells .big { width: 35px; }
.editing { width: 173px; }
.editing .body { padding-left: 9px; }
.editing .stack { width: 80px; margin-right: 2px; }
.editing .line .sum { margin-left: auto; }
.sf, .fs { width: 37px; }
.addins { width: 50px; }
.addins .body { justify-content: center; }
.collapse { margin: auto 6px 6px auto; }

/* Formula bar */
.formula { display: flex; align-items: center; height: 33px; padding: 1px 6px 0; }
.box { display: flex; align-items: center; height: 21px; border: 1px solid #4a4a4a; border-radius: 3px; background: #292929; }
.box input { flex: 1; min-width: 0; border: 0; padding: 0; outline: 0; background: none; }
.name { width: 82px; padding: 0 4px 0 5px; }
.formula .dots { margin: 0 7px; }
.fx { width: 70px; margin-right: 2px; padding: 0 1px 0 4px; justify-content: space-between; }
.fn { font: italic 14px "Liberation Serif", serif; }
.expr { flex: 1; padding: 0 3px 0 8px; }
.expr input { font: 11px "DejaVu Sans Mono", monospace; }

/* Worksheet */
.work { position: relative; display: flex; flex: 1; min-height: 0; }
.vscroll { display: flex; flex-direction: column; align-items: center; width: 17px; padding: 4px 0 2px; }
.thumb { flex: 1; border-radius: 4px; background: #9c9c9c; }
.vscroll .thumb { width: 8px; margin: 3px 0 11px; }
.arrow { width: 0; height: 0; border: 4px solid transparent; }
.up { border-top: 0; border-bottom: 6px solid #a5a5a5; }
.down { border-bottom: 0; border-top: 6px solid #a5a5a5; }
.prev { border-left: 0; border-right: 6px solid #a5a5a5; }
.next { border-right: 0; border-left: 6px solid #a5a5a5; }
.sheet { flex: 1; min-width: 0; overflow: hidden; direction: rtl; }
.sheet table {
  width: calc(100% + 27px);
  table-layout: fixed; border-collapse: separate; border-spacing: 0;
  background: #fff; color: #222;
  font: 12px/14px "Liberation Sans", "DejaVu Sans", sans-serif;
}
.sheet tr { height: 15px; }
.sheet tbody tr:nth-child(5n) { height: 16px; }
.sheet td, .sheet th { padding: 0; height: inherit; font-weight: 400; white-space: nowrap; }
.sheet td { border-left: 1px solid #e1e1e1; border-bottom: 1px solid #e1e1e1; padding-right: 2px; text-align: right; }
.sheet td.label { font-size: 10px; }
.sheet th { background: #0a0a0a; color: #d0d0d0; }
.sheet thead th { border-left: 1px solid #555; font-size: 13px; }
.sheet thead .corner { width: 23px; border: 0; border-left: 1px solid #888; }
.corner i { display: block; width: 0; height: 0; margin: 0 3px 0 auto; border-top: 9px solid transparent; border-left: 9px solid #8a8a8a; }
.sheet tbody th { border-bottom: 1px solid #555; border-left: 1px solid #888; font-size: 13px; }
.sheet thead .hot, .sheet tbody .hot { background: #5f5f5f; color: #eee; }
.sheet tbody .hot { border-left: 1px solid #217346; }
.sheet .start { position: relative; border-bottom-color: #217346; }
.range { position: absolute; top: -2px; left: -2px; right: -1px; border: 2px solid #2c7549; pointer-events: none; }
.handle { position: absolute; left: -2px; bottom: -2px; width: 4px; height: 4px; background: #2c7549; }
.cursor { position: absolute; left: 569px; top: 435px; }

/* Sheet bar */
.sheetbar { display: flex; align-items: center; height: 25px; padding: 0 20px 0 18px; }
.hscroll { display: flex; align-items: center; width: 38%; }
.hscroll .thumb { height: 8px; margin: 0 4px 0 16px; }
.sheetbar .dots { margin-left: 18px; }
.add { width: 20px; margin-right: 33px; height: 20px; }
.sheettab {
  align-self: stretch; padding: 0 6px; margin-bottom: 3px; position: relative;
  border-radius: 0 0 3px 3px; background: #fff; color: #333; font-weight: 600; font-size: 10px;
}
.sheettab span { display: block; border-bottom: 2px solid #2c8a55; line-height: 15px; }
.sheettab::before { content: ""; position: absolute; left: -4px; top: 5px; width: 1px; height: 13px; background: #555; }
.nav { display: flex; gap: 18px; margin-left: 39px; }

/* Status bar */
.status { display: flex; align-items: center; height: 18px; padding: 0 5px 0 9px; border-top: 1px solid #2b2b2b; background: #141414; font-size: 9px; }
.view { display: flex; align-items: center; justify-content: center; width: 32px; height: 17px; }
.view.on { background: #262626; }
.view.last { margin-right: 2px; }
.zoomb { width: 12px; margin: 0 1px; }
.zoom { width: 80px; height: 10px; margin: 0; appearance: none; background: linear-gradient(#888, #888) center / 100% 1px no-repeat; }
.zoom::-webkit-slider-thumb { appearance: none; width: 4px; height: 9px; background: #c4c4c4; }
.status .pct { margin-left: 6px; }

/* Taskbar */
.taskbar { display: flex; height: 24px; background: #233239; }
.apps { display: flex; width: 357px; }
.apps button { flex: 1; display: flex; align-items: center; justify-content: center; }
.apps .active { background: #4c5d64; box-shadow: inset 0 -2px #76b9ed; }
.apps .open { background: linear-gradient(#76b9ed, #76b9ed) bottom / 22px 2px no-repeat; }
.tray { display: flex; align-items: center; gap: 6px; font-size: 9px; color: #e9eef0; }
.lang { margin-left: 3px; }
.tray time { margin-left: 5px; }
.note { margin-left: 9px; }
.peek { width: 1px; height: 24px; margin: 0 2px 0 10px; background: #5b686e; }
```

FILE: sheet.js
```js
const columns = "ABCDEFGHIJKLMNOPQRSTUV".split("");
const rowCount = 31;
const values = {
  E5: "الاسم", F5: "رياضيات", G5: "عربي", H5: "انكليزي", I5: "اسلامية",
  J5: "المعدل", K5: "اقل درجه", L5: "اعلى درجه", M5: "المجموع", N5: "الفراغات",
  E6: "سجاد", F6: 99, G6: 77, H6: 79, I6: 89, J6: 86, K6: 77, L6: 99,
  E7: "احمد", F7: 70, G7: 66, H7: 3, I7: 50, J7: 47.25, K7: 3,
  E8: "الرقم الصعب", F8: 100, G8: 99, H8: 88, I8: 89, J8: 94, K8: 88
};
const table = document.getElementById("cells");

const head = table.createTHead().insertRow();
head.innerHTML = '<th class="corner"><i></i></th>' +
  columns.map(c => `<th scope="col"${c === "L" ? ' class="hot"' : ""}>${c}</th>`).join("");

const body = table.createTBody();
for (let r = 1; r <= rowCount; r++) {
  const row = body.insertRow();
  row.innerHTML = `<th scope="row"${r === 6 ? ' class="hot"' : ""}>${r}</th>`;
  for (const c of columns) {
    const cell = row.insertCell();
    const value = values[c + r];
    if (value === undefined) continue;
    cell.textContent = value;
    cell.className = typeof value === "number" ? "num" : "label";
  }
}

/* Fill range L6:L28, drawn from its first cell */
const start = body.rows[5].cells[12];
start.classList.add("start");
const range = document.createElement("span");
range.className = "range";
start.append(range);
const handle = document.createElement("span");
handle.className = "handle";
start.append(handle);
const top6 = start.getBoundingClientRect().top;
range.style.height = body.rows[27].getBoundingClientRect().bottom - top6 + 3 + "px";
```
